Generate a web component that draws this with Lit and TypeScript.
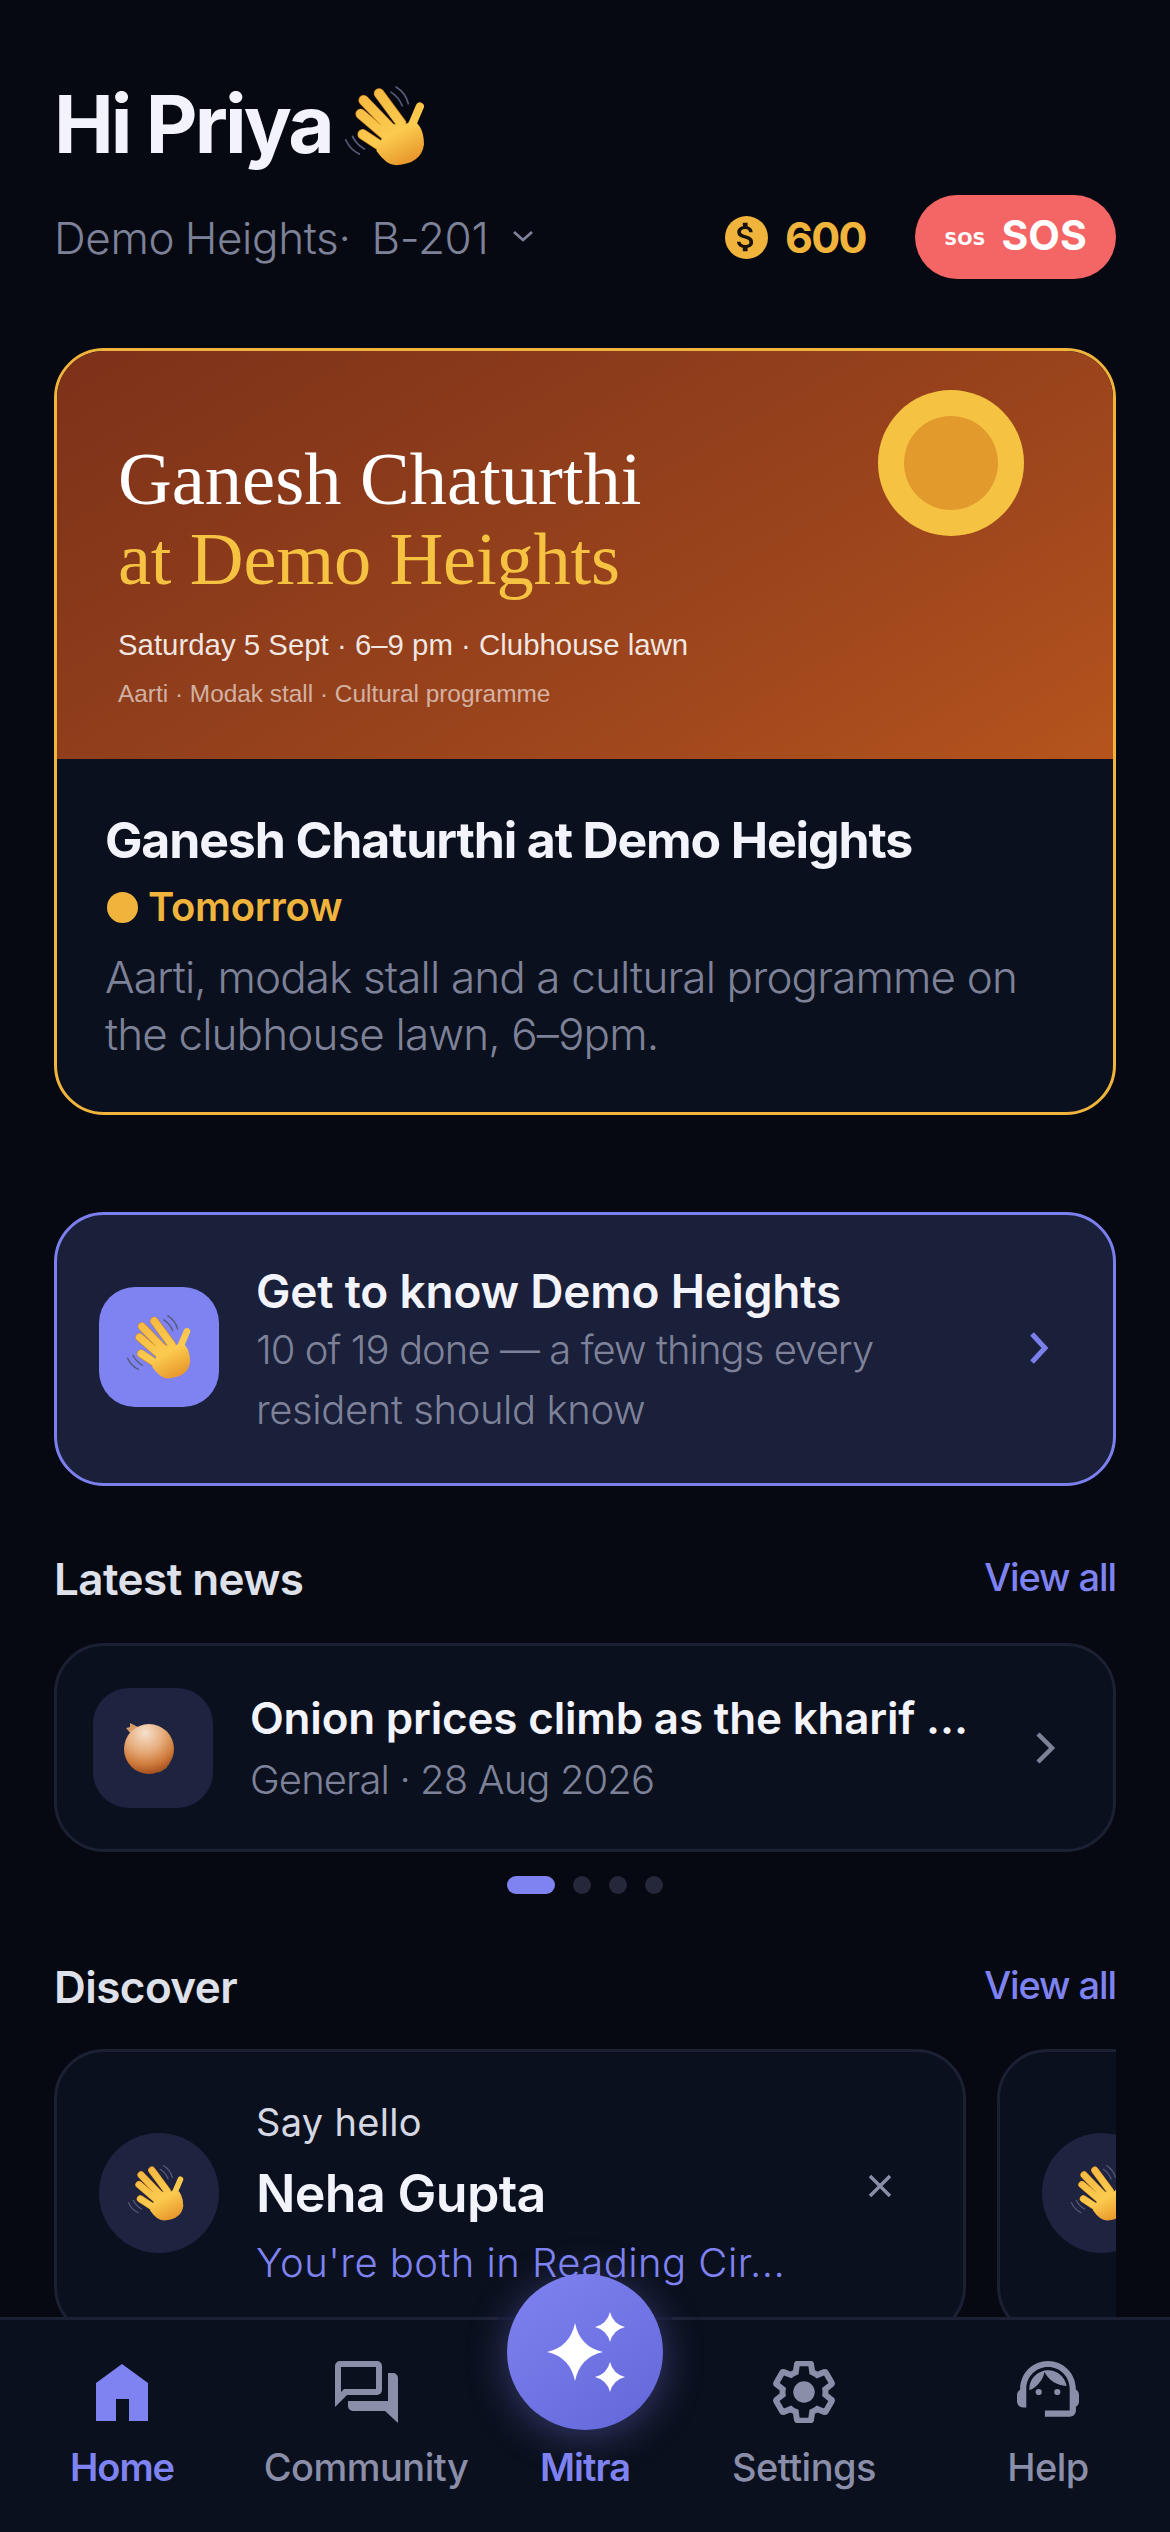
import { LitElement, html, css } from "lit";
import { customElement } from "lit/decorators.js";

const hand = (size: number) => html`
  <svg width=${size} height=${size} viewBox="0 0 235 235" fill="none" aria-hidden="true">
    <defs>
      <linearGradient id="hg" x1="60" y1="20" x2="170" y2="235" gradientUnits="userSpaceOnUse">
        <stop offset="0" stop-color="#f5b942"/>
        <stop offset=".6" stop-color="#fbcb4f"/>
        <stop offset="1" stop-color="#e8972c"/>
      </linearGradient>
    </defs>
    <g stroke="#565b78" stroke-width="5" stroke-linecap="round">
      <path d="M150 3Q178 20 186 52"/><path d="M135 18Q158 32 168 58"/>
      <path d="M2 158Q14 186 42 200"/><path d="M22 148Q32 170 57 185"/>
    </g>
    <g stroke-linecap="round">
      <g stroke="#cf8420" stroke-width="31">
        <path d="M100 22L165 110"/><path d="M55 42L135 125"/><path d="M46 82L125 150"/><path d="M52 142L125 190"/>
      </g>
      <g stroke="url(#hg)" stroke-width="27">
        <path d="M100 22L165 110"/><path d="M55 42L135 125"/><path d="M46 82L125 150"/><path d="M52 142L125 190"/>
        <path d="M220 60L190 130" stroke-width="24"/>
      </g>
    </g>
    <path d="M105 112L178 112L200 100Q232 120 232 172Q225 228 150 233Q122 233 92 190L110 150Z" fill="url(#hg)"/>
  </svg>`;

const onion = html`
  <svg width="56" height="56" viewBox="0 0 56 56" fill="none" aria-hidden="true">
    <defs>
      <radialGradient id="og" cx=".42" cy=".18" r=".88">
        <stop offset="0" stop-color="#f6dfcc"/>
        <stop offset=".42" stop-color="#e6ad7c"/>
        <stop offset=".72" stop-color="#cf7c3c"/>
        <stop offset="1" stop-color="#9a4317"/>
      </radialGradient>
    </defs>
    <path d="M5 8L9 7L9 3L13 5L21 9L11 15Z" fill="#d99a68"/>
    <path d="M41 49L48 44M38 52L46 47" stroke="#7c6a2a" stroke-width="1.2"/>
    <circle cx="28" cy="29" r="25" fill="url(#og)"/>
  </svg>`;

@customElement("app-root")
export class AppRoot extends LitElement {
  static styles = css`
    :host {
      display: flex;
      flex-direction: column;
      width: 1170px;
      height: 2532px;
      overflow: hidden;
      background: #060911;
      font-family: Inter, "Liberation Sans", sans-serif;
      color: #f3f4fb;
    }
    * { box-sizing: border-box; }
    p, h1, h2, h3 { margin: 0; }
    svg { display: block; flex: none; }
    .main {
      flex: 1;
      min-height: 0;
      overflow: hidden;
      padding: 74px 54px 0;
    }
    .hello {
      display: flex;
      align-items: center;
      gap: 13px;
      height: 100px;
      font-size: 80px;
      line-height: 100px;
      font-weight: 700;
      letter-spacing: -2.9px;
    }
    .hello svg { margin-top: 4px; }
    .status {
      display: flex;
      align-items: center;
      justify-content: space-between;
      margin-top: 21px;
      height: 84px;
    }
    .place {
      display: flex;
      align-items: center;
      color: #7e8299;
      font-size: 44px;
      font-weight: 300;
      letter-spacing: -.35px;
      word-spacing: -1.5px;
      padding: 2px 0 0 0;
      white-space: pre;
    }
    .place svg { margin: 0 0 4px 24px; }
    .right { display: flex; align-items: center; }
    .coin {
      width: 43px; height: 43px; border-radius: 50%;
      background: #f0b43c;
      display: flex; align-items: center; justify-content: center;
    }
    .points {
      margin-left: 17px;
      margin-right: 49px;
      color: #f0b43c;
      font-size: 43px;
      font-weight: 700;
      letter-spacing: -1.6px;
    }
    .sos {
      width: 201px; height: 84px; border-radius: 42px;
      background: #f46565;
      display: flex; align-items: center; justify-content: center;
      gap: 16px;
      color: #fff;
      font-size: 41px;
      font-weight: 700;
      padding-bottom: 4px;
    }
    .sos small {
      font-family: "DejaVu Sans", sans-serif;
      font-size: 18px;
      margin-top: 6px;
    }
    .hero {
      margin-top: 69px;
      height: 767px;
      border: 3px solid #f0b43c;
      border-radius: 50px;
      background: #0b101e;
      overflow: hidden;
    }
    .banner {
      position: relative;
      height: 408px;
      padding: 88px 0 0 61px;
      background: linear-gradient(150deg, #7c3119 0%, #8d3c1b 35%, #a0471d 70%, #b5541d 100%);
      font-family: "Liberation Serif", serif;
      color: #fff;
    }
    .sun {
      position: absolute;
      left: 821px; top: 39px;
      width: 146px; height: 146px;
      border-radius: 50%;
      background: #f5c242;
      display: flex; align-items: center; justify-content: center;
    }
    .sun i { display: block; width: 94px; height: 94px; border-radius: 50%; background: #e29a2c; }
    .b-title { font-size: 74.5px; line-height: 80px; }
    .b-title span { display: block; color: #f5c242; letter-spacing: -.2px; }
    .b-when {
      margin-top: 28px;
      font: 29.4px/36px "Liberation Sans", sans-serif;
      color: rgba(255, 255, 255, .88);
    }
    .b-what {
      margin-top: 15px;
      font: 24.4px/32px "Liberation Sans", sans-serif;
      color: rgba(255, 255, 255, .6);
    }
    .h-body { padding: 51px 48px 0; }
    .h-title { font-size: 50px; line-height: 60px; font-weight: 700; letter-spacing: -1.15px; }
    .h-tag {
      display: flex; align-items: center; gap: 10px;
      margin-top: 12px;
      color: #f0b43c;
      font-size: 40px; line-height: 50px; font-weight: 600; letter-spacing: -.3px;
    }
    .h-tag i { width: 31px; height: 31px; border-radius: 50%; background: #f0b43c; margin-left: 2px; }
    .h-desc {
      margin-top: 17px;
      color: #7e8299;
      font-size: 44px; line-height: 57px; font-weight: 300; letter-spacing: -.87px;
    }
    .guide {
      display: flex; align-items: center;
      margin-top: 97px;
      height: 274px;
      padding: 0 63px 0 42px;
      border: 3px solid #7c80ee;
      border-radius: 50px;
      background: #1a1f3a;
    }
    .guide-tile {
      flex: none;
      width: 120px; height: 120px;
      border-radius: 36px;
      background: #7f83f1;
      display: flex; align-items: center; justify-content: center;
      margin: -5px 37px 0 0;
    }
    .guide-text { flex: 1; min-width: 0; padding-top: 5px; }
    .guide-title { font-size: 46px; line-height: 56px; font-weight: 600; letter-spacing: -.2px; margin-bottom: 1px; }
    .guide-sub { color: #7e8299; font-size: 40px; line-height: 60px; font-weight: 300; letter-spacing: -.4px; }
    .guide-sub span { letter-spacing: -.95px; }
    .guide > svg { margin-top: -3px; }
    .head {
      display: flex; align-items: flex-start; justify-content: space-between;
      margin-top: 65px;
    }
    .head h2 { font-size: 44px; line-height: 56px; font-weight: 600; color: #dfe1ea; letter-spacing: -.55px; }
    .head a { font-size: 38px; line-height: 52px; font-weight: 500; color: #7f83f1; letter-spacing: -1.1px; }
    .news {
      display: flex; align-items: center;
      margin-top: 36px;
      height: 209px;
      padding: 0 58px 0 36px;
      border: 3px solid #1c2033;
      border-radius: 50px;
      background: #0b101e;
    }
    .news-tile {
      flex: none;
      width: 120px; height: 120px;
      border-radius: 36px;
      background: #1e2340;
      display: flex; align-items: center; justify-content: center;
      margin-right: 37px;
      padding-right: 8px;
    }
    .news-text { width: 718px; margin-right: 67px; }
    .news-title {
      font-size: 44px; line-height: 56px; font-weight: 600; letter-spacing: -.2px;
      white-space: nowrap;
    }
    .news-sub {
      margin-top: 9px;
      color: #7e8299;
      font-size: 40px; line-height: 50px; font-weight: 300; letter-spacing: -.9px;
    }
    .pager { display: flex; justify-content: center; gap: 18px; margin-top: 24px; height: 18px; }
    .pager i { width: 18px; height: 18px; border-radius: 50%; background: #25273a; }
    .pager i.on { width: 48px; border-radius: 9px; background: #7f83f1; }
    .head.second { margin-top: 65px; }
    .rail {
      display: flex; gap: 31px;
      margin-top: 34px;
      overflow: hidden;
    }
    .hi {
      position: relative;
      flex: none;
      display: flex; align-items: center;
      width: 912px; height: 288px;
      padding: 0 0 0 42px;
      border: 3px solid #1c2033;
      border-radius: 50px;
      background: #0b101e;
    }
    .avatar {
      flex: none;
      width: 120px; height: 120px;
      border-radius: 50%;
      background: #1e2340;
      display: flex; align-items: center; justify-content: center;
      margin-right: 37px;
      padding-right: 6px;
    }
    .hi-text { margin-top: -1px; }
    .hi-say { color: #d5d7e2; font-size: 38px; line-height: 48px; font-weight: 400; letter-spacing: .3px; }
    .hi-name { margin-top: 17px; font-size: 52px; line-height: 62px; font-weight: 600; letter-spacing: -.7px; }
    .hi-why {
      margin-top: 13px; width: 560px;
      color: #7f83f1; font-size: 40px; line-height: 50px; font-weight: 300; letter-spacing: .45px;
    }
    .hi-x { position: absolute; left: 811px; top: 122px; }
    .nav {
      position: relative;
      flex: none;
      display: grid;
      grid-template-columns: 1fr 1fr 194px 1fr 1fr;
      height: 215px;
      padding-top: 41px;
      border-top: 3px solid #1c2033;
      background: #0b101e;
    }
    .nav-gap {
      position: absolute;
      left: 498px; top: -3px;
      width: 174px; height: 3px;
      background: #12162b;
    }
    .tab {
      display: flex; flex-direction: column; align-items: center;
      color: #8a8ea8;
      font-size: 38px; line-height: 48px; font-weight: 500;
      letter-spacing: -.5px;
    }
    .tab svg { margin-bottom: 20px; }
    .tab.on { color: #7f83f1; font-weight: 600; letter-spacing: -1px; }
    .tab .slot { height: 62px; margin-bottom: 20px; }
    .fab {
      position: absolute;
      left: 507px; top: -46px;
      width: 156px; height: 156px;
      border-radius: 50%;
      background: linear-gradient(145deg, #7f83f1, #6366d8);
      box-shadow: 0 6px 40px rgba(124, 128, 238, .38);
      display: flex; align-items: center; justify-content: center;
    }
    .fab svg { margin: 0; }
  `;

  render() {
    return html`
      <div class="main">
        <h1 class="hello">Hi Priya ${hand(80)}</h1>
        <div class="status">
          <div class="place">Demo Heights·  B-201<svg width="22" height="12" viewBox="0 0 22 12" fill="none"><path d="M2 2l9 8 9-8" stroke="#7e8299" stroke-width="2.8"/></svg></div>
          <div class="right">
            <div class="coin"><svg width="38" height="38" viewBox="0 0 24 24" fill="#17120a"><path d="M11.8 10.9c-2.27-.59-3-1.2-3-2.15 0-1.09 1.01-1.85 2.7-1.85 1.78 0 2.44.85 2.5 2.1h2.21c-.07-1.72-1.12-3.3-3.21-3.81V3h-3v2.16c-1.94.42-3.5 1.68-3.5 3.61 0 2.31 1.91 3.46 4.7 4.13 2.5.6 3 1.48 3 2.41 0 .69-.49 1.79-2.7 1.79-2.06 0-2.87-.92-2.98-2.1h-2.2c.12 2.19 1.76 3.42 3.68 3.83V21h3v-2.15c1.95-.37 3.5-1.5 3.5-3.55 0-2.84-2.43-3.81-4.7-4.4z"/></svg></div>
            <div class="points">600</div>
            <div class="sos"><small>SOS</small>SOS</div>
          </div>
        </div>

        <section class="hero">
          <div class="banner">
            <div class="sun"><i></i></div>
            <div class="b-title">Ganesh Chaturthi<span>at Demo Heights</span></div>
            <div class="b-when">Saturday 5 Sept · 6–9 pm · Clubhouse lawn</div>
            <div class="b-what">Aarti · Modak stall · Cultural programme</div>
          </div>
          <div class="h-body">
            <h3 class="h-title">Ganesh Chaturthi at Demo Heights</h3>
            <div class="h-tag"><i></i>Tomorrow</div>
            <p class="h-desc">Aarti, modak stall and a cultural programme on the clubhouse lawn, 6–9pm.</p>
          </div>
        </section>

        <section class="guide">
          <div class="guide-tile">${hand(64)}</div>
          <div class="guide-text">
            <div class="guide-title">Get to know Demo Heights</div>
            <div class="guide-sub"><span>10 of 19 done — a few things every</span><br>resident should know</div>
          </div>
          <svg width="22" height="34" viewBox="0 0 22 34" fill="none"><path d="M4 3l13 14L4 31" stroke="#7c80ee" stroke-width="5"/></svg>
        </section>

        <div class="head"><h2>Latest news</h2><a>View all</a></div>
        <section class="news">
          <div class="news-tile">${onion}</div>
          <div class="news-text">
            <div class="news-title">Onion prices climb as the kharif …</div>
            <div class="news-sub">General · 28 Aug 2026</div>
          </div>
          <svg width="22" height="34" viewBox="0 0 22 34" fill="none"><path d="M3 3l14 14L3 31" stroke="#7e8299" stroke-width="4.5"/></svg>
        </section>
        <div class="pager"><i class="on"></i><i></i><i></i><i></i></div>

        <div class="head second"><h2>Discover</h2><a>View all</a></div>
        <div class="rail">
          <article class="hi">
            <div class="avatar">${hand(56)}</div>
            <div class="hi-text">
              <div class="hi-say">Say hello</div>
              <div class="hi-name">Neha Gupta</div>
              <div class="hi-why">You're both in Reading Cir...</div>
            </div>
            <svg class="hi-x" width="24" height="24" viewBox="0 0 24 24" fill="none"><path d="M2 2l20 20M22 2L2 22" stroke="#8a8ea8" stroke-width="3.4"/></svg>
          </article>
          <article class="hi"><div class="avatar">${hand(56)}</div></article>
        </div>
      </div>

      <nav class="nav">
        <i class="nav-gap"></i>
        <div class="tab on">
          <svg width="52" height="62" viewBox="0 0 52 62" fill="#7f83f1"><path d="M26 3L52 22V60H33V38H20V60H0V22Z"/></svg>
          Home
        </div>
        <div class="tab">
          <svg width="63" height="62" viewBox="0 0 63 62" fill="#8a8ea8" fill-rule="evenodd"><path d="M5 0H42a5 5 0 0 1 5 5V29a5 5 0 0 1-5 5H12L0 46V5a5 5 0 0 1 5-5ZM6 6V31L9 28H41V6Z"/><path d="M53 12H58a5 5 0 0 1 5 5V62L50 50H18a5 5 0 0 1-5-5V40H53Z"/></svg>
          Community
        </div>
        <div class="tab on">
          <div class="slot"></div>
          <div class="fab">
            <svg width="90" height="90" viewBox="0 0 90 90" fill="#fff"><path d="M35 16Q40 40 63 45Q40 50 35 74Q30 50 7 45Q30 40 35 16Z"/><path d="M70 5Q73 17 85 20Q73 23 70 35Q67 23 55 20Q67 17 70 5Z"/><path d="M70 55Q73 67 85 70Q73 73 70 85Q67 73 55 70Q67 67 70 55Z"/></svg>
          </div>
          Mitra
        </div>
        <div class="tab">
          <svg width="62" height="62" viewBox="1.6 1.6 20.8 20.8" fill="none"><path d="M19.14 12.94c.04-.3.06-.61.06-.94 0-.32-.02-.64-.07-.94l2.03-1.58c.18-.14.23-.41.12-.61l-1.92-3.32c-.12-.22-.37-.29-.59-.22l-2.39.96c-.5-.38-1.03-.7-1.62-.94l-.36-2.54c-.04-.24-.24-.41-.48-.41h-3.84c-.24 0-.43.17-.47.41l-.36 2.54c-.59.24-1.13.57-1.62.94l-2.39-.96c-.22-.08-.47 0-.59.22L2.74 8.87c-.12.21-.08.47.12.61l2.03 1.58c-.05.3-.09.63-.09.94s.02.64.07.94l-2.03 1.58c-.18.14-.23.41-.12.61l1.92 3.32c.12.22.37.29.59.22l2.39-.96c.5.38 1.03.7 1.62.94l.36 2.54c.05.24.24.41.48.41h3.84c.24 0 .44-.17.47-.41l.36-2.54c.59-.24 1.13-.56 1.62-.94l2.39.96c.22.08.47 0 .59-.22l1.92-3.32c.12-.22.07-.47-.12-.61l-2.01-1.58z" stroke="#8a8ea8" stroke-width="2"/><circle cx="12" cy="12" r="3.6" fill="#8a8ea8"/></svg>
          Settings
        </div>
        <div class="tab">
          <svg width="62" height="62" viewBox="2 3 20 20" fill="#8a8ea8"><path d="M21 12.22C21 6.73 16.74 3 12 3c-4.69 0-9 3.65-9 9.28-.6.34-1 .98-1 1.72v2c0 1.1.9 2 2 2h1v-6.1c0-3.87 3.13-7 7-7s7 3.13 7 7V19h-8v2h8c1.1 0 2-.9 2-2v-1.22c.59-.31 1-.92 1-1.61v-2.3c0-.67-.41-1.28-1-1.65z"/><circle cx="9" cy="13" r="1"/><circle cx="15" cy="13" r="1"/><path d="M18 11.03C17.52 8.18 15.04 6 12.05 6c-3.03 0-6.29 2.51-6.03 6.45 2.47-1.01 4.33-3.21 4.86-5.89 1.31 2.63 4 4.44 7.12 4.47z"/></svg>
          Help
        </div>
      </nav>
    `;
  }
}
